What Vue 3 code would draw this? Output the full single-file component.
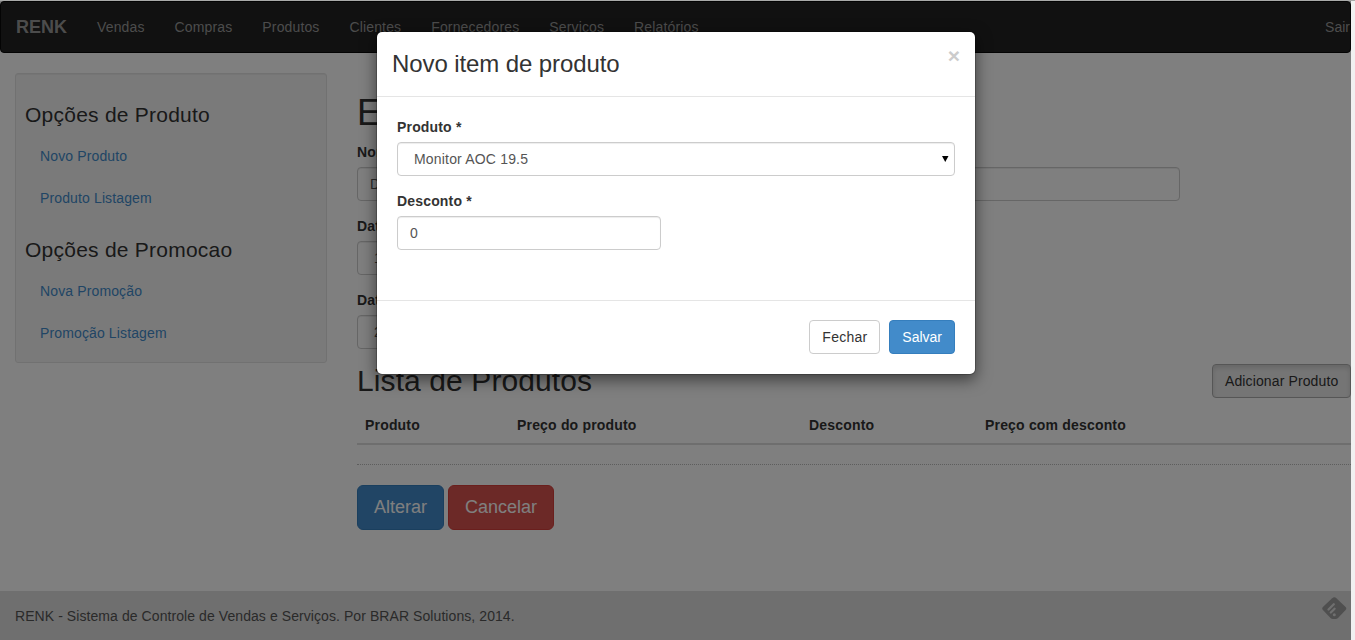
<script setup>
const menu = ['Vendas', 'Compras', 'Produtos', 'Clientes', 'Fornecedores', 'Serviços', 'Relatórios']
const groups = [
  { title: 'Opções de Produto', links: ['Novo Produto', 'Produto Listagem'] },
  { title: 'Opções de Promocao', links: ['Nova Promoção', 'Promoção Listagem'] },
]
const columns = ['Produto', 'Preço do produto', 'Desconto', 'Preço com desconto']
</script>

<template>
  <div class="window">
    <div class="page">
      <nav class="navbar">
        <a class="brand">RENK</a>
        <a v-for="item in menu" :key="item" class="nav-item">{{ item }}</a>
        <a class="nav-item exit">Sair</a>
      </nav>

      <div class="columns">
        <aside class="well">
          <section v-for="g in groups" :key="g.title">
            <h3>{{ g.title }}</h3>
            <a v-for="l in g.links" :key="l" class="side-link">{{ l }}</a>
          </section>
        </aside>

        <main>
          <h1>E</h1>
          <label>Nome</label>
          <div class="control wide">D</div>
          <label>Data</label>
          <div class="control date">1</div>
          <label>Data</label>
          <div class="control date">2</div>

          <div class="list-head">
            <h2>Lista de Produtos</h2>
            <button class="btn add">Adicionar Produto</button>
          </div>
          <div class="thead">
            <span v-for="c in columns" :key="c">{{ c }}</span>
          </div>
          <div class="dotted"></div>
          <div class="actions">
            <button class="btn large primary">Alterar</button>
            <button class="btn large danger">Cancelar</button>
          </div>
        </main>
      </div>

      <footer class="footer">RENK - Sistema de Controle de Vendas e Serviços. Por BRAR Solutions, 2014.</footer>

      <svg class="reader" width="25" height="23" viewBox="0 0 25 23">
        <path d="M10.200 1.200Q12.300 -.6 14.400 1.200L23.600 9.900Q25 11.500 23.600 13L16 21Q15 22 13.500 22H11Q9.500 22 8.500 21L.9 13Q-.5 11.500 .9 9.900Z" fill="#9e9e9e" />
        <path d="M6.500 12.500L11.800 7.300M8.800 15.500L12.600 11.800" stroke="#dedede" stroke-width="2.300" stroke-linecap="round" fill="none" />
        <circle cx="12.300" cy="17.800" r="1.500" fill="#dedede" />
      </svg>

      <div class="backdrop"></div>

      <div class="modal">
        <header class="modal-header">
          <h4>Novo item de produto</h4>
          <button class="close">×</button>
        </header>
        <div class="modal-body">
          <label>Produto *</label>
          <div class="control select">
            <span>Monitor AOC 19.5</span>
            <svg width="7" height="6" viewBox="0 0 7 6"><path d="M0 0H6.500L3.250 6Z" fill="#000" /></svg>
          </div>
          <label>Desconto *</label>
          <div class="control discount">0</div>
        </div>
        <div class="modal-footer">
          <button class="btn dismiss">Fechar</button>
          <button class="btn primary">Salvar</button>
        </div>
      </div>
    </div>
  </div>
</template>

<style>
html, body { margin: 0; overflow: hidden; }
</style>

<style scoped>
* { box-sizing: border-box; }
.window {
  width: 1355px;
  height: 640px;
  background: #f1f1f1;
  border-top: 1px solid #a9aaa9;
  font: 14px/20px "Liberation Sans", Arial, sans-serif;
  color: #333;
}
.page {
  position: relative;
  width: 1351px;
  height: 639px;
  overflow: hidden;
  background: #fff;
  display: flex;
  flex-direction: column;
}
.navbar {
  flex: none;
  display: flex;
  height: 52px;
  background: #222;
  border: 1px solid #080808;
  border-radius: 4px;
  color: #999;
  margin-bottom: 20px;
}
.brand { padding: 15px; font-size: 18px; font-weight: bold; }
.nav-item { padding: 15px; letter-spacing: 0.14px; }
.exit { margin-left: auto; padding-right: 0; letter-spacing: 0; }
.columns { display: flex; align-items: flex-start; padding-left: 15px; gap: 30px; }
.well {
  width: 312px;
  height: 290px;
  padding: 9px;
  background: #f5f5f5;
  border: 1px solid #e3e3e3;
  border-radius: 3px;
  box-shadow: inset 0 1px 1px rgba(0, 0, 0, 0.05);
}
h1, h2, h3, h4 { margin: 0; font-weight: normal; }
h3 { font-size: 21px; line-height: 23px; margin: 20px 0 10px; letter-spacing: 0.24px; }
.side-link { display: block; padding: 10px 15px; color: #428bca; letter-spacing: 0.13px; }
.side-link + .side-link { margin-top: 2px; }
main { flex: 1; }
h1 { font-size: 36px; line-height: 39px; margin: 20px 0 10px; }
label { display: block; font-weight: bold; margin-bottom: 5px; letter-spacing: 0.17px; }
.control {
  height: 34px;
  padding: 6px 12px;
  margin-bottom: 15px;
  border: 1px solid #ccc;
  border-radius: 4px;
  background: #fff;
  color: #555;
  box-shadow: inset 0 1px 1px rgba(0, 0, 0, 0.075);
}
.wide { width: 823px; }
.date { width: 264px; text-indent: 4px; }
.discount { width: 264px; }
.list-head { display: flex; justify-content: space-between; height: 43px; align-items: flex-start; }
h2 { font-size: 30px; line-height: 33px; letter-spacing: 0.1px; }
.btn {
  height: 34px;
  padding: 6px 12px;
  font: inherit;
  color: #333;
  background: #fff;
  border: 1px solid #ccc;
  border-radius: 4px;
  white-space: nowrap;
}
.btn.add {
  width: 139px;
  letter-spacing: 0.12px;
  background: #ebebeb;
  border-color: #adadad;
  box-shadow: inset 0 3px 5px rgba(0, 0, 0, 0.125);
}
.btn.dismiss { width: 71px; letter-spacing: 0.27px; }
.btn.primary { background: #428bca; border-color: #357ebd; color: #fff; }
.btn.danger { background: #d9534f; border-color: #d43f3a; color: #fff; }
.btn.large { height: 45px; padding: 10px 16px; font-size: 18px; line-height: 23px; border-radius: 6px; }
.thead {
  display: grid;
  grid-template-columns: 152px 292px 176px 374px;
  border-bottom: 2px solid #ddd;
  font-weight: bold;
  letter-spacing: 0.18px;
}
.thead span { padding: 8px; }
.dotted { margin: 19px 0 20px; border-top: 1px dotted #bbb; }
.actions { display: flex; gap: 4px; }
.footer { margin-top: auto; height: 49px; padding: 15px; background: #dedede; color: #555; letter-spacing: 0.075px; }
.reader { position: absolute; right: 4px; top: 596px; }
.backdrop { position: absolute; inset: 0; background: rgba(0, 0, 0, 0.5); }
.modal {
  position: absolute;
  left: 376px;
  top: 30px;
  width: 600px;
  height: 344px;
  background: #fff;
  background-clip: padding-box;
  border: 1px solid rgba(0, 0, 0, 0.2);
  border-radius: 6px;
  box-shadow: 0 5px 15px rgba(0, 0, 0, 0.5);
}
.modal-header {
  display: flex;
  justify-content: space-between;
  align-items: flex-start;
  height: 65px;
  padding: 15px;
  border-bottom: 1px solid #e5e5e5;
}
h4 { font-size: 24px; line-height: 34px; letter-spacing: -0.1px; }
.close {
  padding: 0;
  margin-top: -2px;
  border: 0;
  background: none;
  font: bold 21px/21px "Liberation Sans", Arial, sans-serif;
  color: #ccc;
}
.modal-body { padding: 20px; }
.select { display: flex; justify-content: space-between; align-items: center; padding: 0 5px 0 16px; letter-spacing: 0.18px; }
.modal-footer {
  display: flex;
  justify-content: flex-end;
  gap: 9px;
  padding: 19px 20px 20px;
  border-top: 1px solid #e5e5e5;
}
.modal-body .discount { margin-bottom: 30px; }
</style>
